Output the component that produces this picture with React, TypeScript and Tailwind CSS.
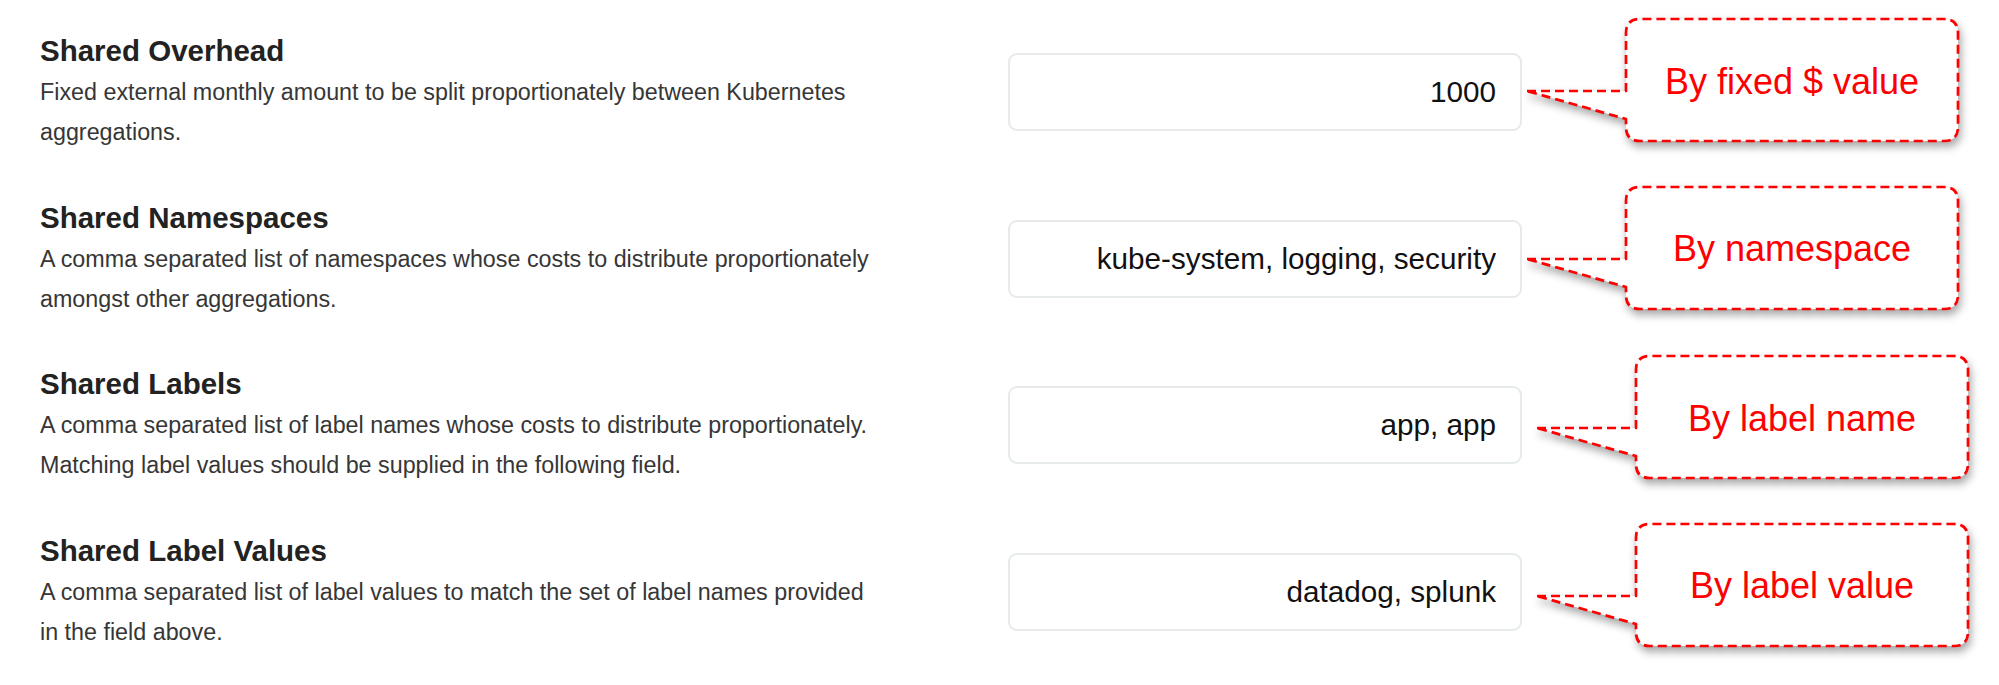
import React from 'react';

type Row = {
  title: string;
  lines: string[];
  value: string;
  note: string;
  noteClass: string;
};

const rows: Row[] = [
  {
    title: 'Shared Overhead',
    lines: ['Fixed external monthly amount to be split proportionately between Kubernetes', 'aggregations.'],
    value: '1000',
    note: 'By fixed $ value',
    noteClass: 'ml-[5px] -mt-[14px]',
  },
  {
    title: 'Shared Namespaces',
    lines: ['A comma separated list of namespaces whose costs to distribute proportionately', 'amongst other aggregations.'],
    value: 'kube-system, logging, security',
    note: 'By namespace',
    noteClass: 'ml-[5px] -mt-[13px]',
  },
  {
    title: 'Shared Labels',
    lines: [
      'A comma separated list of label names whose costs to distribute proportionately.',
      'Matching label values should be supplied in the following field.',
    ],
    value: 'app, app',
    note: 'By label name',
    noteClass: 'ml-[15px] -mt-[10px]',
  },
  {
    title: 'Shared Label Values',
    lines: ['A comma separated list of label values to match the set of label names provided', 'in the field above.'],
    value: 'datadog, splunk',
    note: 'By label value',
    noteClass: 'ml-[15px] -mt-[9px]',
  },
];

const Callout: React.FC<{ text: string; className: string }> = ({ text, className }) => (
  <div className={`relative shrink-0 w-[440px] h-[130px] ${className}`}>
    <svg
      width="440"
      height="130"
      viewBox="0 0 440 130"
      className="overflow-visible drop-shadow-[2px_5px_4px_rgba(0,0,0,0.35)]"
    >
      <path
        d="M0 72 L99 72 L99 14 Q99 0 113 0 L417 0 Q431 0 431 14 L431 108 Q431 122 417 122 L113 122 Q99 122 99 108 L99 100 Z"
        fill="#ffffff"
        stroke="#ff0000"
        strokeWidth="2.7"
        strokeDasharray="9 5"
        strokeLinejoin="round"
      />
    </svg>
    {/* label sits on top of the drawn bubble */}
    <div className="absolute left-[99px] top-0 w-[332px] h-[122px] pt-[3px] flex items-center justify-center text-[36px] text-[#ff0000]">
      {text}
    </div>
  </div>
);

const App: React.FC = () => {
  return (
    <div className="w-full h-[685px] bg-white overflow-hidden pt-[33px] font-['Liberation_Sans',Arial,sans-serif]">
      {rows.map((row) => (
        <div key={row.title} className="flex items-start h-[166.67px]">
          <div className="w-[1008px] shrink-0 pl-[40px]">
            <h3 className="text-[29.5px] leading-[36px] font-bold text-[#222222]">{row.title}</h3>
            <p className="mt-[3px] text-[23.3px] leading-[40px] text-[#363636]">
              {row.lines.map((line) => (
                <span key={line} className="block whitespace-nowrap">
                  {line}
                </span>
              ))}
            </p>
          </div>
          <input
            readOnly
            value={row.value}
            className="shrink-0 mt-[20px] w-[514px] h-[78px] rounded-[9px] border-2 border-[#e6eaea] bg-white pr-[24px] text-right text-[29.7px] text-[#111111] outline-none"
          />
          <Callout text={row.note} className={row.noteClass} />
        </div>
      ))}
    </div>
  );
};

export default App;
